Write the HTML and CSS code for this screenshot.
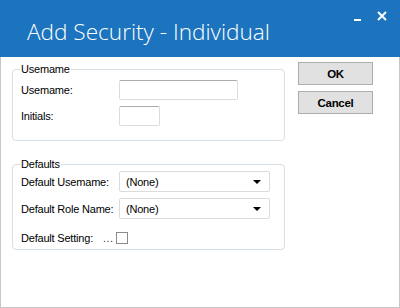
FILE: index.html
```html
<!DOCTYPE html>
<html>
<head>
<meta charset="utf-8">
<link rel="stylesheet" href="styles.css">
</head>
<body>
<div class="window">
  <div class="titlebar">
    <h1 class="title">Add Security - Individual</h1>
    <div class="controls">
      <span class="minimize"></span>
      <svg class="close" width="10" height="10" viewBox="0 0 10 10"><path d="M1 1 L9 9 M9 1 L1 9" stroke="#fff" stroke-width="2" fill="none"/></svg>
    </div>
  </div>
  <div class="content">
    <div class="groups">
      <fieldset class="group group-user">
        <legend class="legend">Usemame</legend>
        <div class="form-grid">
          <label class="label">Usemame:</label>
          <div class="textbox textbox-wide"></div>
          <label class="label">Initials:</label>
          <div class="textbox textbox-small"></div>
        </div>
      </fieldset>
      <fieldset class="group group-defaults">
        <legend class="legend">Defaults</legend>
        <div class="form-grid">
          <label class="label">Default Usemame:</label>
          <div class="select"><span class="select-value">(None)</span><span class="arrow"></span></div>
          <label class="label">Default Role Name:</label>
          <div class="select"><span class="select-value">(None)</span><span class="arrow"></span></div>
        </div>
        <div class="check-row">
          <label class="label check-label">Default Setting:</label>
          <span class="dots">...</span>
          <span class="checkbox"></span>
        </div>
      </fieldset>
    </div>
    <div class="buttons">
      <button class="btn">OK</button>
      <button class="btn">Cancel</button>
    </div>
  </div>
</div>
</body>
</html>
```
FILE: styles.css
```css
* { box-sizing: border-box; }
html, body { margin: 0; padding: 0; background: #fff; }
body { font-family: "Liberation Sans", Arial, sans-serif; font-size: 11px; color: #000; }

.window {
  width: 400px;
  height: 308px;
  border: 1px solid #c6c6c6;
  border-top: none;
  background: #fff;
}

.titlebar {
  height: 57px;
  margin: 0 -1px;
  background: #1b74bd;
  display: flex;
  justify-content: space-between;
  align-items: flex-start;
}

.title {
  margin: 0;
  padding: 17px 0 0 27px;
  font-family: "Open Sans", sans-serif;
  font-weight: 300;
  font-size: 22.6px;
  line-height: 30px;
  color: #fff;
}

.controls {
  display: flex;
  align-items: center;
  gap: 16px;
  padding: 11px 13px 0 0;
}

.minimize {
  display: block;
  width: 7px;
  height: 2px;
  background: #fff;
  margin-top: 7px;
}

.close { display: block; }

.content {
  display: flex;
  padding: 5px 0 0 11px;
}

.groups { width: 273px; }

.group {
  margin: 0;
  border: 1px solid #d6dfe6;
  border-radius: 4px;
  padding: 0 8px 14px 8px;
}

.group-defaults {
  margin-top: 16px;
  padding-bottom: 5px;
}

.legend {
  padding: 0 1px;
  margin-left: -1px;
  line-height: 14px;
  letter-spacing: -0.2px;
}

.form-grid {
  display: grid;
  grid-template-columns: 98px auto;
  row-gap: 6px;
  align-items: center;
  justify-items: start;
  margin-top: 4px;
}

.group-defaults .form-grid { margin-top: 0; }

.label { letter-spacing: -0.2px; line-height: 14px; }

.textbox {
  height: 20px;
  border: 1px solid #dcdcdc;
  border-top-color: #ababab;
  border-radius: 2px;
}
.textbox-wide { width: 119px; }
.textbox-small { width: 41px; }

.select {
  width: 151px;
  height: 21px;
  border: 1px solid #dcdcdc;
  border-radius: 2px;
  display: flex;
  align-items: center;
  justify-content: space-between;
  padding: 0 8px 0 6px;
}
.select-value { letter-spacing: -0.2px; }
.arrow {
  width: 0; height: 0;
  border-left: 4px solid transparent;
  border-right: 4px solid transparent;
  border-top: 4px solid #000;
}

.check-row {
  display: flex;
  align-items: center;
  margin-top: 13px;
  height: 12px;
}
.check-label { width: 82px; }
.dots { width: 13px; letter-spacing: 0.5px; color: #333; }
.checkbox {
  width: 12px;
  height: 12px;
  border: 1px solid #8a8a8a;
  background: #fff;
}

.buttons {
  display: flex;
  flex-direction: column;
  gap: 6px;
  margin: 0 0 0 13px;
}

.btn {
  width: 75px;
  height: 23px;
  background: #e1e1e1;
  border: 1px solid #adadad;
  border-radius: 0;
  font-family: "Liberation Sans", Arial, sans-serif;
  font-weight: bold;
  font-size: 11.5px;
  color: #000;
  padding: 0;
  letter-spacing: -0.3px;
}
```
